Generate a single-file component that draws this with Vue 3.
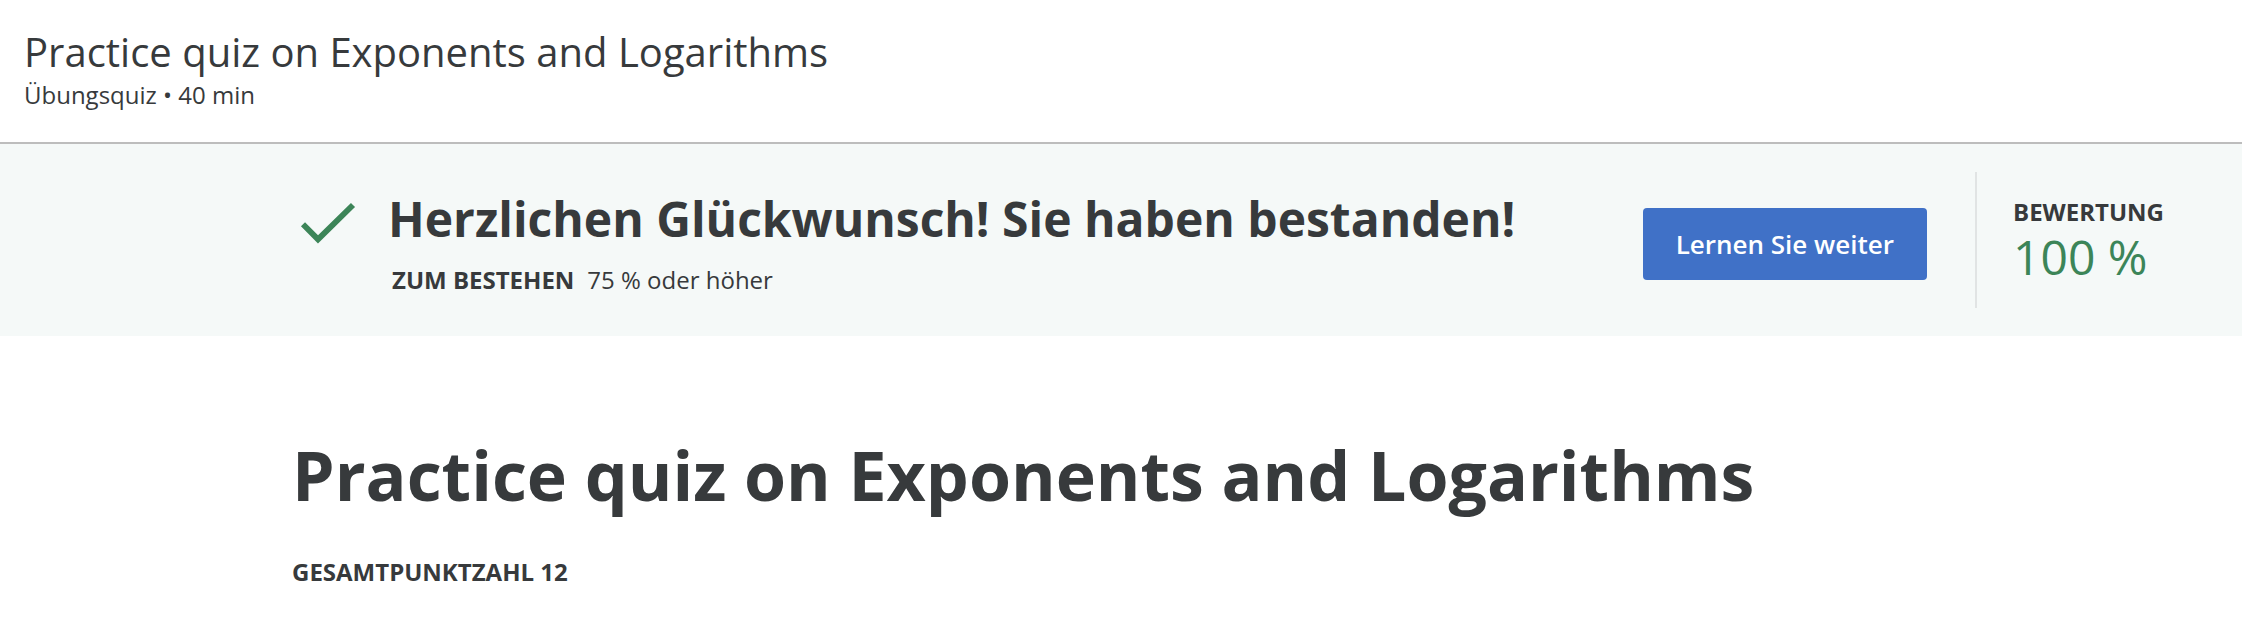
<script setup>
const title = 'Practice quiz on Exponents and Logarithms'
</script>

<template>
  <div class="page">
    <header class="top">
      <h2 class="top-title">{{ title }}</h2>
      <p class="top-meta">Übungsquiz • 40 min</p>
    </header>
    <section class="banner">
      <svg class="check" viewBox="0 0 56 44" aria-hidden="true">
        <path d="M3 22.3 L18 37.3 L53 3" fill="none" stroke="#3c8558" stroke-width="5.8" />
      </svg>
      <div class="message">
        <h2 class="congrats">Herzlichen Glückwunsch! Sie haben bestanden!</h2>
        <p class="pass"><strong>ZUM BESTEHEN</strong><span>75 % oder höher</span></p>
      </div>
      <button class="continue" type="button">Lernen Sie weiter</button>
      <div class="grade">
        <strong class="grade-label">BEWERTUNG</strong>
        <span class="grade-value">100 %</span>
      </div>
    </section>
    <main class="content">
      <h1 class="title">{{ title }}</h1>
      <p class="total">GESAMTPUNKTZAHL 12</p>
    </main>
  </div>
</template>

<style>
body {
  background: #fff;
}
</style>

<style scoped>
.page {
  font-family: "Open Sans", sans-serif;
  color: #373a3c;
}
h1, h2, p {
  margin: 0;
}
.top {
  padding: 25px 24px 31px;
  border-bottom: 2px solid #bdbdbd;
}
.top-title {
  font-size: 40px;
  line-height: 54px;
  font-weight: 400;
}
.top-meta {
  font-size: 24px;
  line-height: 32px;
}
.banner {
  display: flex;
  align-items: center;
  padding: 28px 78px 28px 300px;
  background: #f5f9f8;
}
.check {
  width: 56px;
  height: 44px;
  margin-right: 32px;
  margin-bottom: 32px;
}
.message {
  flex: 1;
  padding-top: 3px;
}
.congrats {
  font-size: 48px;
  line-height: 64px;
  font-weight: 700;
}
.pass {
  display: flex;
  gap: 13px;
  margin: 13px 4px 0;
  font-size: 24px;
  line-height: 32px;
}
.continue {
  height: 72px;
  margin-top: 8px;
  padding: 0 33px;
  border: 0;
  border-radius: 4px;
  background: #4071c7;
  color: #fff;
  font: 600 26px/36px "Open Sans", sans-serif;
}
.grade {
  display: flex;
  flex-direction: column;
  box-sizing: border-box;
  min-height: 136px;
  margin-left: 48px;
  padding: 24px 0 20px 36px;
  border-left: 2px solid #e1e4e4;
}
.grade-label {
  font-size: 24px;
  line-height: 32px;
}
.grade-value {
  font-size: 48px;
  line-height: 58px;
  color: #3c8558;
}
.content {
  padding: 92px 292px 32px;
}
.title {
  font-size: 68px;
  line-height: 94px;
  font-weight: 700;
}
.total {
  margin-top: 34px;
  font-size: 24px;
  line-height: 32px;
  font-weight: 700;
}
</style>
